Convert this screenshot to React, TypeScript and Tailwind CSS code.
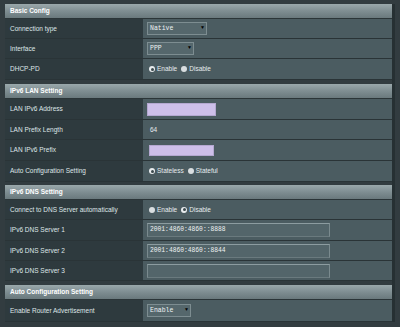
import React from 'react'

const Header = ({ title }: { title: string }) => (
  <div className='h-[15px] flex items-center pl-[5px] text-[6.5px] font-bold text-white bg-gradient-to-b from-[#9aa8ab] via-[#7f8e92] to-[#6a797d] border-b border-[#2b3538]'>
    {title}
  </div>
)

const Row = ({ label, h, children }: { label: string; h: string; children?: React.ReactNode }) => (
  <div className={`flex ${h} border-b border-[#2a3437]`}>
    <div className='w-[138px] shrink-0 flex items-center pl-[5px] bg-[#2e3a3e] text-[#dfe6e8] text-[6.5px]'>{label}</div>
    <div className='flex-1 flex items-center pl-[4px] bg-[#4b5c61] text-[#e6ecee] text-[6.5px]'>{children}</div>
  </div>
)

const Select = ({ value, w }: { value: string; w: string }) => (
  <div className={`${w} h-[13px] flex items-center justify-between px-[2px] border border-[#7d8d91] bg-[#55676c] font-['Liberation_Mono',monospace] text-[6.5px] text-[#eef2f3]`}>
    <span>{value}</span>
    <span className='text-[5px] text-black'>▼</span>
  </div>
)

const Radio = ({ checked, label }: { checked?: boolean; label: string }) => (
  <span className='flex items-center mr-[4px]'>
    <span className={`w-[6px] h-[6px] rounded-full mr-[2px] flex items-center justify-center ${checked ? 'bg-[#e8ecee]' : 'bg-[#d9dee0]'}`}>
      {checked && <span className='w-[3px] h-[3px] rounded-full bg-[#3c4a4e]' />}
    </span>
    {label}
  </span>
)

const Lav = ({ w, ml, h }: { w: string; ml?: string; h: string }) => (
  <div className={`${w} ${ml ?? ''} ${h} bg-[#cdbfe9] border border-[#b4a8d0]`} />
)

const Dns = ({ value }: { value?: string }) => (
  <div className='w-[183px] h-[14px] flex items-center px-[2px] border border-t-[#8c9ca0] border-l-[#7a8a8e] border-r-[#7a8a8e] border-b-[#6a7a7e] bg-[#53656a] font-["Liberation_Mono",monospace] text-[6.3px] text-[#eef2f3]'>
    {value}
  </div>
)

const App = () => {
  return (
    <div className='w-[400px] h-[327px] bg-[#323c40] pt-[4px] pl-[5px] pr-[5px] font-["Liberation_Sans",Arial,sans-serif] overflow-hidden'>
      <div className='border-r-[3px] border-[#263033]'>
        <div className='mb-[4px]'>
          <Header title='Basic Config' />
          <Row label='Connection type' h='h-[20px]'><Select value='Native' w='w-[60px]' /></Row>
          <Row label='Interface' h='h-[20px]'><Select value='PPP' w='w-[47px]' /></Row>
          <Row label='DHCP-PD' h='h-[21px]'>
            <span className='pl-[2px] flex'><Radio checked label='Enable' /><Radio label='Disable' /></span>
          </Row>
        </div>
        <div className='mb-[3px]'>
          <Header title='IPv6 LAN Setting' />
          <Row label='LAN IPv6 Address' h='h-[21px]'><Lav w='w-[69px]' h='h-[13px]' /></Row>
          <Row label='LAN Prefix Length' h='h-[20px]'><span className='pl-[3px]'>64</span></Row>
          <Row label='LAN IPv6 Prefix' h='h-[21px]'><Lav w='w-[65px]' ml='ml-[2px]' h='h-[11px]' /></Row>
          <Row label='Auto Configuration Setting' h='h-[21px]'>
            <span className='pl-[2px] flex'><Radio checked label='Stateless' /><Radio label='Stateful' /></span>
          </Row>
        </div>
        <div className='mb-[4px]'>
          <Header title='IPv6 DNS Setting' />
          <Row label='Connect to DNS Server automatically' h='h-[20px]'>
            <span className='pl-[2px] flex'><Radio label='Enable' /><Radio checked label='Disable' /></span>
          </Row>
          <Row label='IPv6 DNS Server 1' h='h-[21px]'><Dns value='2001:4860:4860::8888' /></Row>
          <Row label='IPv6 DNS Server 2' h='h-[20px]'><Dns value='2001:4860:4860::8844' /></Row>
          <Row label='IPv6 DNS Server 3' h='h-[20px]'><Dns /></Row>
        </div>
        <div>
          <Header title='Auto Configuration Setting' />
          <Row label='Enable Router Advertisement' h='h-[22px]'><Select value='Enable' w='w-[44px]' /></Row>
        </div>
      </div>
    </div>
  )
}

export default App
